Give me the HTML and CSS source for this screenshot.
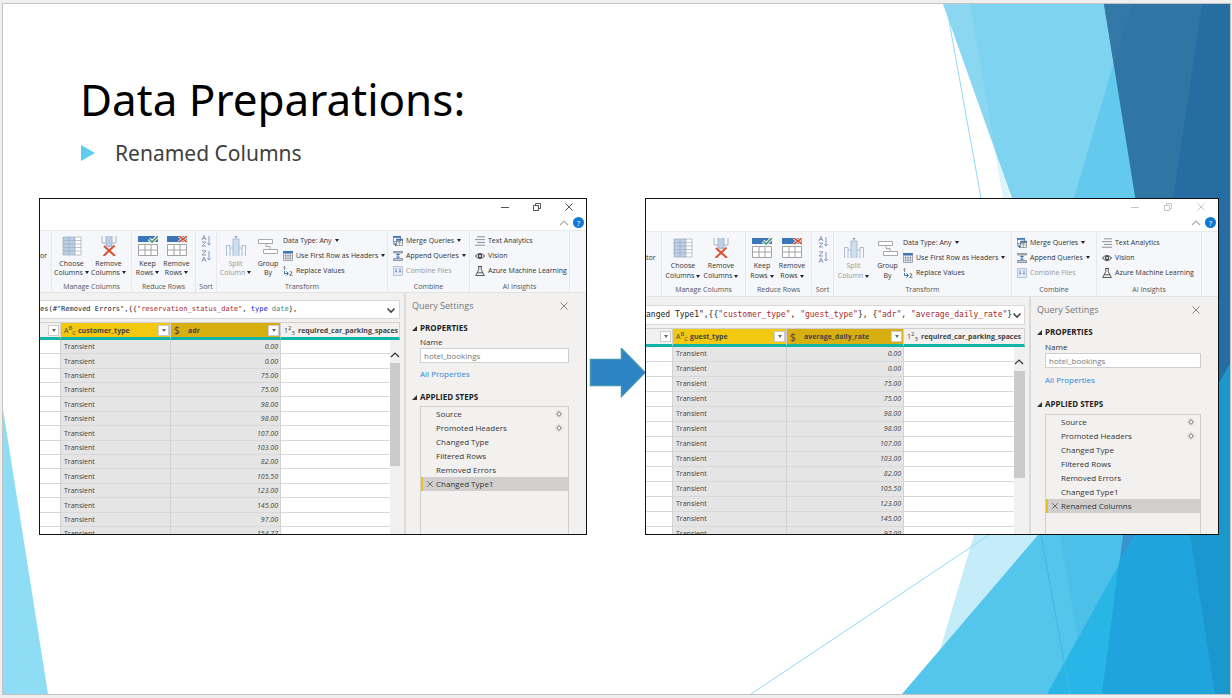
FILE: index.html
```html
<!DOCTYPE html>
<html lang="en">
<head>
<meta charset="utf-8">
<title>Data Preparations</title>
<link rel="stylesheet" href="styles.css">
</head>
<body>
<svg class="sprite" aria-hidden="true">
  <symbol id="choose" viewBox="0 0 20 20"><path fill="#fff" d="M1 1h18v18H1z"/><path fill="#b9cfea" d="M1 1h12v18H1z"/><path d="M1 1h18v18H1zM7 1v18M13 1v18M1 4.500h18M1 8h18M1 11.500h18M1 15h18" fill="none" stroke="#a0aab5" stroke-width=".7"/></symbol>
  <symbol id="removecol" viewBox="0 0 20 20"><path fill="#b9cfea" d="M7 0h6v11H7z"/><path d="M3 0v7h4M7 0v9l3 2 3-2V0M17 0v7h-4" fill="none" stroke="#aab4bf"/><path d="M5 10l11 10M15.500 9.500L4.500 20" stroke="#d9512f" stroke-width="2"/></symbol>
  <symbol id="keep" viewBox="0 0 20 20"><path fill="#fff" d="M.5 8.500h19v11H.5z"/><path fill="#3b76b8" d="M0 0h20v6H0z"/><path d="M.5 8.500h19v11H.5zM.5 14h19M7 8.500v11M13 8.500v11" fill="none" stroke="#a2a2a2"/><path d="M11 3l3 3 6-6" fill="none" stroke="#fff" stroke-width="3.500"/><path d="M11 3l3 3 6-6" fill="none" stroke="#4d9475" stroke-width="1.600"/></symbol>
  <symbol id="removerow" viewBox="0 0 20 20"><path fill="#fff" d="M.5 8.500h19v11H.5z"/><path fill="#3b76b8" d="M0 0h20v6H0z"/><path d="M.5 8.500h19v11H.5zM.5 14h19M7 8.500v11M13 8.500v11" fill="none" stroke="#a2a2a2"/><path d="M12 0l8 6M20 0l-8 6" stroke="#fff" stroke-width="3"/><path d="M12 0l8 6M20 0l-8 6" stroke="#d9512f" stroke-width="1.600"/></symbol>
  <symbol id="sortaz" viewBox="0 0 10 12"><path d="M1 5l2-4.500L5 5M1.500 3.500h3M1 7h4l-4 4h4" fill="none" stroke="#8b9cb3"/><path d="M8 1v9M6.300 8.300L8 10l1.700-1.700" fill="none" stroke="#7f9cc4"/></symbol>
  <symbol id="sortza" viewBox="0 0 10 12"><path d="M1 .8h4L1 5h4M1 11.500L3 7l2 4.500M1.500 10h3" fill="none" stroke="#8b9cb3"/><path d="M8 1v9M6.300 8.300L8 10l1.700-1.700" fill="none" stroke="#7f9cc4"/></symbol>
  <symbol id="split" viewBox="0 0 20 20"><path fill="#cfdff0" d="M7 3h6v17H7z"/><path d="M.5 20V9.500H4V20M7 20V3h6v17M16 20V9.500h3.500V20M4 12h3M13 12h3" fill="none" stroke="#a9bdd4"/><path d="M8.500 0h3L10 2.500z" fill="#7f9cc4"/></symbol>
  <symbol id="group" viewBox="0 0 20 20"><path d="M.5 3.500h14v4H.5zM5.500 13.500h14v4h-14zM8 7.500v3h4v3" fill="#fff" stroke="#a8a8a8"/></symbol>
  <symbol id="table" viewBox="0 0 10 10"><path fill="#fff" d="M.5 1h9v8.500h-9z"/><path fill="#3b76b8" d="M0 0h10v2.500H0z"/><path d="M.5 1v8.500h9V1M2.700 2v7.500M5 2v7.500M7.300 2v7.500M.5 4.800h9M.5 7.200h9" fill="none" stroke="#7c8794" stroke-width=".7"/></symbol>
  <symbol id="replace" viewBox="0 0 10 10"><path d="M.5 1.500L1.700.5V4M6.700 6q1.300-1 2 0t-2 3.300H9.500" fill="none" stroke="#555" stroke-width=".8"/><path d="M1.500 5v2.500h3.500M3.500 5.500l2 2-2 2" fill="none" stroke="#3b76b8"/></symbol>
  <symbol id="merge" viewBox="0 0 10 10"><path d="M.5.500h7v5h-7zM3.500 3h6v6.500h-6z" fill="#fff" stroke="#777" stroke-width=".7"/><path d="M0 0h8v1.700H0zM3.300 3H10v1.700H3.300z" fill="#3b76b8"/><path d="M3.500 7h6M6.500 4.500V10" stroke="#888" stroke-width=".6"/><path d="M1 5.500v3h2M2 7.500l1.500 1L2 10" fill="none" stroke="#3b76b8"/></symbol>
  <symbol id="append" viewBox="0 0 10 10"><path d="M.5.500h9v1.500h-9zM.5 7.500h9v2h-9z" fill="#b9cfea" stroke="#777" stroke-width=".7"/><path d="M5 2.500V7M3.300 3.500h3.400M3.300 5.500L5 7.200l1.700-1.700" fill="none" stroke="#3b76b8"/></symbol>
  <symbol id="combine" viewBox="0 0 10 10"><path d="M.5.500h9v9h-9z" fill="#e4edf7" stroke="#b5c6dc"/><path d="M3 2v4M7 2v4M2 5l1 1.300L4 5M6 5l1 1.300L8 5" fill="none" stroke="#5f87bd" stroke-width=".8"/></symbol>
  <symbol id="lines" viewBox="0 0 10 10"><path d="M2 .8h8M0 3.600h10M2 6.400h8M0 9.200h10" stroke="#777" stroke-width=".8"/></symbol>
  <symbol id="eye" viewBox="0 0 10 10"><path d="M.3 5Q5 0 9.700 5 5 10 .3 5z" fill="none" stroke="#444"/><circle cx="5" cy="5" r="1.600" fill="none" stroke="#444" stroke-width="1.200"/></symbol>
  <symbol id="flask" viewBox="0 0 10 10"><path d="M3 .5h4M3.800.500v3L.7 9.500h8.600L6.200 3.500v-3M2.200 6.800h5.600" fill="none" stroke="#444" stroke-width=".9"/></symbol>
  <symbol id="gear" viewBox="0 0 10 10"><circle cx="5" cy="5" r="2.300" fill="none" stroke="#999" stroke-width="1.200"/><path d="M5 .8v2M5 7.200v2M.8 5h2M7.200 5h2M2 2l1.300 1.300M6.700 6.700L8 8M8 2L6.700 3.300M3.300 6.700L2 8" stroke="#999" stroke-width="1.200"/></symbol>
  <symbol id="x" viewBox="0 0 10 10"><path d="M1.500 1.500l7 7M8.500 1.500l-7 7" stroke="currentColor"/></symbol>
  <symbol id="restore" viewBox="0 0 10 10"><path d="M1.500 3.500h5v5h-5zM3.500 3.500v-2h5v5h-2" fill="none" stroke="currentColor"/></symbol>
  <symbol id="min" viewBox="0 0 10 10"><path d="M1 5.500h8" stroke="currentColor"/></symbol>
  <symbol id="up" viewBox="0 0 10 10"><path d="M1 7l4-4 4 4" fill="none" stroke="currentColor" stroke-width="1.200"/></symbol>
  <symbol id="down" viewBox="0 0 10 10"><path d="M1.500 3.500L5 7l3.500-3.500" fill="none" stroke="currentColor" stroke-width="1.600"/></symbol>
  <symbol id="fold" viewBox="0 0 6 6"><path d="M6 0v6H0z" fill="#333"/></symbol>
</svg>

<main class="slide">
  <svg class="facets" viewBox="3 4 1227 690" preserveAspectRatio="none" aria-hidden="true">
    <path fill="#8fdcf5" d="M3 409L48 694H3z"/>
    <path fill="#dcf4fc" d="M994 146l24 75h-11z"/>
    <path fill="#c5edf9" d="M974 535h166v159H927z"/>
    <path fill="#8bd7f1" d="M943 4h35l40 211z"/>
    <path fill="#7dd3f0" d="M970 4h162l-58 211h-56L995 149z"/>
    <path fill="#63caee" d="M1131 4L1069 215h161V4z"/>
    <path fill="#7dd3f0" d="M1100 4h50l-37 61z"/>
    <path fill="#3076a5" d="M1104 4h126v391H1167z"/>
    <path fill="#3478a8" d="M1104 4h28l-18 61z"/>
    <path fill="#266da1" d="M1202 4h28v391h-86z"/>
    <path fill="#54c5eb" d="M1038 535h192v159H902z"/>
    <path fill="#4dc0e9" d="M1060 535h170v159h-143z"/>
    <path fill="#3a92cc" d="M1123 535h107v40h-112z"/>
    <path fill="#29b5e6" d="M1230 364v330h-183z"/>
    <path fill="#1fa4dd" d="M1119 562L1230 364v330H1102z"/>
    <path fill="#1b97cd" d="M1230 364v330h-15l-25-159v-100z"/>
    <path fill="none" stroke="#8fdaf3" d="M946 4l35 194M989 535L751 694"/>
    <path fill="none" stroke="#3db9e6" d="M1041 535l29 159"/>
  </svg>

  <header class="heading">
    <h1 class="title">Data Preparations:</h1>
    <ul class="bullets"><li>Renamed Columns</li></ul>
  </header>

  <div class="compare">
    <section class="screen before" aria-label="Before renaming">
      <div class="titlebar">
        <div class="winbuttons">
          <button aria-label="Minimize"><svg><use href="#min"/></svg></button>
          <button aria-label="Restore"><svg><use href="#restore"/></svg></button>
          <button aria-label="Close"><svg><use href="#x"/></svg></button>
        </div>
        <div class="helprow">
          <button class="collapse" aria-label="Collapse ribbon"><svg><use href="#up"/></svg></button>
          <button class="help">?</button>
        </div>
      </div>
      <div class="ribbon">
        <div class="group cut"><span>or</span></div>
        <div class="group">
          <div class="tools">
            <button class="big"><svg><use href="#choose"/></svg>Choose<span class="caret">Columns</span></button>
            <button class="big"><svg><use href="#removecol"/></svg>Remove<span class="caret">Columns</span></button>
          </div>
          <div class="label">Manage Columns</div>
        </div>
        <div class="group reduce">
          <div class="tools">
            <button class="big"><svg><use href="#keep"/></svg>Keep<span class="caret">Rows</span></button>
            <button class="big"><svg><use href="#removerow"/></svg>Remove<span class="caret">Rows</span></button>
          </div>
          <div class="label">Reduce Rows</div>
        </div>
        <div class="group">
          <div class="sorts">
            <button aria-label="Sort ascending"><svg><use href="#sortaz"/></svg></button>
            <button aria-label="Sort descending"><svg><use href="#sortza"/></svg></button>
          </div>
          <div class="label">Sort</div>
        </div>
        <div class="group transform">
          <div class="tools">
            <button class="big muted"><svg><use href="#split"/></svg>Split<span class="caret">Column</span></button>
            <button class="big"><svg><use href="#group"/></svg>Group<span>By</span></button>
            <div class="list">
              <button class="small caret">Data Type: Any</button>
              <button class="small caret"><svg><use href="#table"/></svg>Use First Row as Headers</button>
              <button class="small"><svg><use href="#replace"/></svg>Replace Values</button>
            </div>
          </div>
          <div class="label">Transform</div>
        </div>
        <div class="group">
          <div class="list">
            <button class="small caret"><svg><use href="#merge"/></svg>Merge Queries</button>
            <button class="small caret"><svg><use href="#append"/></svg>Append Queries</button>
            <button class="small muted"><svg><use href="#combine"/></svg>Combine Files</button>
          </div>
          <div class="label">Combine</div>
        </div>
        <div class="group">
          <div class="list">
            <button class="small"><svg><use href="#lines"/></svg>Text Analytics</button>
            <button class="small"><svg><use href="#eye"/></svg>Vision</button>
            <button class="small"><svg><use href="#flask"/></svg>Azure Machine Learning</button>
          </div>
          <div class="label">AI Insights</div>
        </div>
        <div class="group"></div>
      </div>
      <div class="work">
        <div class="data">
          <div class="formula"><code>es(#"Removed Errors",{{<b>"reservation_status_date"</b>, <i>type</i> <em>date</em>},</code><button aria-label="Expand formula"><svg><use href="#down"/></svg></button></div>
          <table class="grid">
            <colgroup><col class="c0"><col class="c1"><col class="c2"><col><col class="c4"></colgroup>
            <thead><tr>
              <th><div class="head"><button class="filter" aria-label="Filter"></button></div></th>
              <th class="gold"><div class="head"><span class="kind">A<sup>B</sup><sub>C</sub></span><span class="name">customer_type</span><button class="filter" aria-label="Filter customer_type"></button></div></th>
              <th class="gold deep"><div class="head"><span class="kind money">$</span><span class="name">adr</span><button class="filter" aria-label="Filter adr"></button></div></th>
              <th colspan="2"><div class="head"><span class="kind">1<sup>2</sup><sub>3</sub></span><span class="name">required_car_parking_spaces</span></div></th>
            </tr></thead>
            <tbody>
              <tr><td></td><td>Transient</td><td>0.00</td><td></td><td class="scroll" rowspan="14"><div class="track"><svg><use href="#up"/></svg><div class="thumb"></div></div></td></tr>
              <tr><td></td><td>Transient</td><td>0.00</td><td></td></tr>
              <tr><td></td><td>Transient</td><td>75.00</td><td></td></tr>
              <tr><td></td><td>Transient</td><td>75.00</td><td></td></tr>
              <tr><td></td><td>Transient</td><td>98.00</td><td></td></tr>
              <tr><td></td><td>Transient</td><td>98.00</td><td></td></tr>
              <tr><td></td><td>Transient</td><td>107.00</td><td></td></tr>
              <tr><td></td><td>Transient</td><td>103.00</td><td></td></tr>
              <tr><td></td><td>Transient</td><td>82.00</td><td></td></tr>
              <tr><td></td><td>Transient</td><td>105.50</td><td></td></tr>
              <tr><td></td><td>Transient</td><td>123.00</td><td></td></tr>
              <tr><td></td><td>Transient</td><td>145.00</td><td></td></tr>
              <tr><td></td><td>Transient</td><td>97.00</td><td></td></tr>
              <tr><td></td><td>Transient</td><td>154.77</td><td></td></tr>
            </tbody>
          </table>
        </div>
        <aside class="settings">
          <div class="panelhead"><h2>Query Settings</h2><button aria-label="Close panel"><svg><use href="#x"/></svg></button></div>
          <h3><svg><use href="#fold"/></svg>PROPERTIES</h3>
          <div class="props">
            <label for="name-before">Name</label>
            <input id="name-before" type="text" value="hotel_bookings">
            <a href="#all">All Properties</a>
          </div>
          <h3><svg><use href="#fold"/></svg>APPLIED STEPS</h3>
          <ol class="steps">
            <li>Source<svg class="gear"><use href="#gear"/></svg></li>
            <li>Promoted Headers<svg class="gear"><use href="#gear"/></svg></li>
            <li>Changed Type</li>
            <li>Filtered Rows</li>
            <li>Removed Errors</li>
            <li class="current"><button aria-label="Delete step"><svg><use href="#x"/></svg></button>Changed Type1</li>
          </ol>
        </aside>
      </div>
    </section>

    <svg class="arrow" viewBox="0 0 58 52" aria-hidden="true"><path d="M3.500 11.500h31v-11L58 24.500l-23.500 24v-11h-31z" fill="#2e83c4" stroke="#3f96b5" stroke-width="1.500"/></svg>

    <section class="screen after" aria-label="After renaming">
      <div class="titlebar">
        <div class="winbuttons">
          <button aria-label="Minimize"><svg><use href="#min"/></svg></button>
          <button aria-label="Restore"><svg><use href="#restore"/></svg></button>
          <button aria-label="Close"><svg><use href="#x"/></svg></button>
        </div>
        <div class="helprow">
          <button class="collapse" aria-label="Collapse ribbon"><svg><use href="#up"/></svg></button>
          <button class="help">?</button>
        </div>
      </div>
      <div class="ribbon">
        <div class="group cut"><span>tor</span></div>
        <div class="group">
          <div class="tools">
            <button class="big"><svg><use href="#choose"/></svg>Choose<span class="caret">Columns</span></button>
            <button class="big"><svg><use href="#removecol"/></svg>Remove<span class="caret">Columns</span></button>
          </div>
          <div class="label">Manage Columns</div>
        </div>
        <div class="group reduce">
          <div class="tools">
            <button class="big"><svg><use href="#keep"/></svg>Keep<span class="caret">Rows</span></button>
            <button class="big"><svg><use href="#removerow"/></svg>Remove<span class="caret">Rows</span></button>
          </div>
          <div class="label">Reduce Rows</div>
        </div>
        <div class="group">
          <div class="sorts">
            <button aria-label="Sort ascending"><svg><use href="#sortaz"/></svg></button>
            <button aria-label="Sort descending"><svg><use href="#sortza"/></svg></button>
          </div>
          <div class="label">Sort</div>
        </div>
        <div class="group transform">
          <div class="tools">
            <button class="big muted"><svg><use href="#split"/></svg>Split<span class="caret">Column</span></button>
            <button class="big"><svg><use href="#group"/></svg>Group<span>By</span></button>
            <div class="list">
              <button class="small caret">Data Type: Any</button>
              <button class="small caret"><svg><use href="#table"/></svg>Use First Row as Headers</button>
              <button class="small"><svg><use href="#replace"/></svg>Replace Values</button>
            </div>
          </div>
          <div class="label">Transform</div>
        </div>
        <div class="group">
          <div class="list">
            <button class="small caret"><svg><use href="#merge"/></svg>Merge Queries</button>
            <button class="small caret"><svg><use href="#append"/></svg>Append Queries</button>
            <button class="small muted"><svg><use href="#combine"/></svg>Combine Files</button>
          </div>
          <div class="label">Combine</div>
        </div>
        <div class="group">
          <div class="list">
            <button class="small"><svg><use href="#lines"/></svg>Text Analytics</button>
            <button class="small"><svg><use href="#eye"/></svg>Vision</button>
            <button class="small"><svg><use href="#flask"/></svg>Azure Machine Learning</button>
          </div>
          <div class="label">AI Insights</div>
        </div>
        <div class="group"></div>
      </div>
      <div class="work">
        <div class="data">
          <div class="formula"><code>anged Type1",{{<b>"customer_type"</b>, <b>"guest_type"</b>}, {<b>"adr"</b>, <b>"average_daily_rate"</b>}</code><button aria-label="Expand formula"><svg><use href="#down"/></svg></button></div>
          <table class="grid">
            <colgroup><col class="c0"><col class="c1"><col class="c2"><col><col class="c4"></colgroup>
            <thead><tr>
              <th><div class="head"><button class="filter" aria-label="Filter"></button></div></th>
              <th class="gold"><div class="head"><span class="kind">A<sup>B</sup><sub>C</sub></span><span class="name">guest_type</span><button class="filter" aria-label="Filter guest_type"></button></div></th>
              <th class="gold deep"><div class="head"><span class="kind money">$</span><span class="name">average_daily_rate</span><button class="filter" aria-label="Filter average_daily_rate"></button></div></th>
              <th colspan="2"><div class="head"><span class="kind">1<sup>2</sup><sub>3</sub></span><span class="name">required_car_parking_spaces</span></div></th>
            </tr></thead>
            <tbody>
              <tr><td></td><td>Transient</td><td>0.00</td><td></td><td class="scroll" rowspan="13"><div class="track"><svg><use href="#up"/></svg><div class="thumb"></div></div></td></tr>
              <tr><td></td><td>Transient</td><td>0.00</td><td></td></tr>
              <tr><td></td><td>Transient</td><td>75.00</td><td></td></tr>
              <tr><td></td><td>Transient</td><td>75.00</td><td></td></tr>
              <tr><td></td><td>Transient</td><td>98.00</td><td></td></tr>
              <tr><td></td><td>Transient</td><td>98.00</td><td></td></tr>
              <tr><td></td><td>Transient</td><td>107.00</td><td></td></tr>
              <tr><td></td><td>Transient</td><td>103.00</td><td></td></tr>
              <tr><td></td><td>Transient</td><td>82.00</td><td></td></tr>
              <tr><td></td><td>Transient</td><td>105.50</td><td></td></tr>
              <tr><td></td><td>Transient</td><td>123.00</td><td></td></tr>
              <tr><td></td><td>Transient</td><td>145.00</td><td></td></tr>
              <tr><td></td><td>Transient</td><td>97.00</td><td></td></tr>
            </tbody>
          </table>
        </div>
        <aside class="settings">
          <div class="panelhead"><h2>Query Settings</h2><button aria-label="Close panel"><svg><use href="#x"/></svg></button></div>
          <h3><svg><use href="#fold"/></svg>PROPERTIES</h3>
          <div class="props">
            <label for="name-after">Name</label>
            <input id="name-after" type="text" value="hotel_bookings">
            <a href="#all">All Properties</a>
          </div>
          <h3><svg><use href="#fold"/></svg>APPLIED STEPS</h3>
          <ol class="steps">
            <li>Source<svg class="gear"><use href="#gear"/></svg></li>
            <li>Promoted Headers<svg class="gear"><use href="#gear"/></svg></li>
            <li>Changed Type</li>
            <li>Filtered Rows</li>
            <li>Removed Errors</li>
            <li>Changed Type1</li>
            <li class="current"><button aria-label="Delete step"><svg><use href="#x"/></svg></button>Renamed Columns</li>
          </ol>
        </aside>
      </div>
    </section>
  </div>
</main>
</body>
</html>
```

FILE: styles.css
```css
* { box-sizing: border-box; }
body {
  margin: 0;
  padding: 3px 1px 3px 2px;
  min-height: 100vh;
  display: flex;
  background: #efefef;
  font-family: "Open Sans", "Noto Sans", sans-serif;
}
button { padding: 0; border: 0; background: none; font: inherit; color: inherit; }
svg { display: block; flex: none; }
.sprite { position: absolute; width: 0; height: 0; }

.slide {
  position: relative;
  flex: 1;
  min-width: 0;
  border: 1px solid #c3c3c3;
  background: #fff;
}
.facets { position: absolute; inset: 0; width: 100%; height: 100%; }

.heading { position: relative; padding: 65px 78px 0 77px; height: 194px; font-family: "Noto Sans", sans-serif; }
.title { margin: 0; font-size: 44px; line-height: 60px; font-weight: 400; color: #000; }
.bullets { margin: 8px 0 0; padding: 0 0 0 1px; list-style: none; font-size: 21px; line-height: 32px; color: #404040; }
.bullets li { display: flex; align-items: center; gap: 20px; }
.bullets li::before {
  content: "";
  border-left: 14px solid #5fcbef;
  border-top: 8px solid transparent;
  border-bottom: 8px solid transparent;
}

.compare {
  position: relative;
  display: grid;
  grid-template-columns: 548fr 58fr 574fr;
  padding: 0 11px 0 36px;
}
.arrow { width: 100%; height: 52px; margin-top: 150px; }

/* Query editor window */
.screen {
  --line: 9px;
  --big-top: 5px;
  --list-top: 2px;
  display: flex;
  flex-direction: column;
  height: 337px;
  min-width: 0;
  overflow: hidden;
  border: 1px solid #111;
  background: #f2f1f0;
  font-size: 7px;
  line-height: var(--line);
  color: #333;
}
.after { --line: 10px; --big-top: 6px; --list-top: 3px; }

.titlebar { height: 31px; flex: none; background: #fff; }
.after .titlebar { height: 32px; }
.winbuttons { display: flex; justify-content: flex-end; height: 16px; padding-right: 1px; color: #555; }
.winbuttons button { width: 32px; display: grid; place-items: center; }
.winbuttons svg { width: 10px; height: 10px; }
.after .winbuttons { color: #c5c5c5; }
.after .winbuttons button { width: 33px; }
.helprow { display: flex; justify-content: flex-end; align-items: center; gap: 4px; height: 15px; padding-right: 2px; }
.helprow svg { width: 10px; height: 10px; color: #aaa; }
.help { width: 11px; height: 11px; border-radius: 50%; background: #0f78d0; color: #fff; text-align: center; line-height: 10px; font-size: 8px; }

.ribbon {
  flex: none;
  display: grid;
  grid-template-columns: 12fr 80fr 64fr 21fr 171fr 82fr 100fr 16fr;
  height: 63px;
  border-top: 1px solid #e8e9ea;
  border-bottom: 1px solid #e3e4e5;
  background: #f5f7fa;
}
.after .ribbon { height: 66px; grid-template-columns: 16fr 84fr 66fr 22fr 178fr 85fr 105fr 16fr; }
.group { min-width: 0; display: flex; flex-direction: column; border-right: 1px solid #e6e8eb; white-space: nowrap; }
.group:last-child { border-right: 0; }
.cut { justify-content: center; padding-bottom: 12px; }
.label { margin-top: auto; padding-bottom: 1px; text-align: center; color: #555; }
.tools { display: flex; padding-left: 1px; }
.after .group:nth-child(2) .tools { padding-left: 2px; }
.big { width: 37px; flex: none; padding-top: var(--big-top); display: flex; flex-direction: column; align-items: center; }
.big svg { width: 20px; height: 20px; margin-bottom: 3px; }
.after .big { width: 38px; }
.reduce .big { width: 29px; }
.transform .big { width: 35px; }
.transform .big + .big { width: 30px; }
.after .reduce .big { width: 30px; }
.after .transform .big { width: 37px; }
.after .transform .big + .big { width: 31px; }
.muted { color: #999; }
.caret { display: flex; align-items: center; }
.caret::after {
  content: "";
  margin-left: 2px;
  border-top: 3px solid #222;
  border-left: 2px solid transparent;
  border-right: 2px solid transparent;
}
.list { padding-top: var(--list-top); padding-left: 5px; display: flex; flex-direction: column; align-items: flex-start; }
.transform .list { padding-left: 0; }
.small { display: flex; align-items: center; gap: 3px; height: 15px; }
.small svg { width: 10px; height: 10px; }
.small.caret::after { margin-left: 0; }
.sorts { display: flex; flex-direction: column; align-items: center; gap: 3px; padding-top: 4px; }
.sorts svg { width: 10px; height: 12px; }

.work { flex: 1; min-height: 0; display: grid; grid-template-columns: 364fr 182fr; }
.after .work { grid-template-columns: 383fr 189fr; }
.data { min-width: 0; min-height: 0; overflow: hidden; padding: 7px 4px 0 0; }
.after .data { padding-top: 8px; }
.formula {
  display: flex;
  align-items: center;
  justify-content: space-between;
  height: 19px;
  padding-right: 3px;
  border: 1px solid #d8d8d8;
  border-left: 0;
  background: #fff;
  color: #222;
  font-family: "DejaVu Sans Mono", monospace;
}
.formula code { font: inherit; white-space: pre; }
.formula b { font-weight: 400; color: #a82a2a; }
.formula i { font-style: normal; color: #1414e0; }
.formula em { font-style: normal; color: #2d8a8a; }
.formula svg { width: 10px; height: 10px; color: #444; }
.after .formula { height: 20px; font-size: 8px; }

.grid { width: 100%; margin-top: 3px; table-layout: fixed; border-collapse: separate; border-spacing: 0; }
.c0 { width: 21px; }
.c1, .c2 { width: 110px; }
.c4 { width: 10px; }
.after .c0 { width: 27px; }
.after .c1 { width: 114px; }
.after .c2 { width: 117px; }
.after .c4 { width: 11px; }
.grid th {
  padding: 0;
  height: 18px;
  border-top: 1px solid #cfcfcf;
  border-right: 1px solid #d0d0d0;
  border-bottom: 3px solid #10b5a5;
  background: #f2f1f0;
  text-align: left;
}
.after .grid th { height: 19px; }
.grid th.gold { background: #f2c811; }
.grid th.deep { background: #d8af10; }
.head { display: flex; align-items: center; padding: 0 1px 0 3px; white-space: nowrap; }
.kind { width: 14px; flex: none; font-weight: 400; color: #444; }
.kind sup, .kind sub { font-size: 6px; line-height: 0; }
.money { font-size: 10px; }
.name { color: #444; }
.filter { width: 11px; height: 11px; margin-left: auto; border: 1px solid #ccc; background: #fff; display: grid; place-items: center; }
.filter::after { content: ""; border-top: 3px solid #666; border-left: 2px solid transparent; border-right: 2px solid transparent; }
.grid tbody tr { height: 14px; }
.before .grid tbody tr:nth-child(5n+2), .before .grid tbody tr:nth-child(5n) { height: 15px; }
.after .grid tbody tr { height: 15px; }
.grid td { padding: 0 2px 0 3px; border-bottom: 1px solid #d9d9d9; border-right: 1px solid #d2d2d2; background: #fff; color: #444; }
.grid td:nth-child(2), .grid td:nth-child(3) { background: #e5e5e5; }
.grid td:nth-child(3) { text-align: right; font-style: italic; }
.grid td:nth-child(4) { border-right: 0; }
.grid td.scroll { padding: 0; border: 0; background: #f0f0f0; vertical-align: top; }
.track { padding-top: 10px; }
.track svg { width: 10px; height: 10px; color: #333; }
.thumb { height: 103px; margin-top: 3px; background: #cbcbcb; }
.after .thumb { height: 107px; margin-top: 4px; }

.settings { min-width: 0; padding: 7px 17px 0 6px; border-left: 2px solid #dbdbdb; display: flex; flex-direction: column; }
.panelhead { display: flex; justify-content: space-between; align-items: center; height: 12px; }
.panelhead h2 { margin: 0; font-size: 9px; line-height: 12px; font-weight: 400; color: #777; }
.panelhead button { color: #888; }
.panelhead svg { width: 10px; height: 10px; }
.settings h3 { display: flex; align-items: center; gap: 3px; height: 12px; margin: 10px 0 0; font-size: 8px; line-height: 12px; font-weight: 700; color: #222; }
.settings h3 svg { width: 5px; height: 5px; }
.props { display: flex; flex-direction: column; align-items: flex-start; padding-left: 8px; font-size: 8px; line-height: 12px; }
.props label { margin-top: 2px; }
.props input { width: 100%; height: 15px; padding: 0 3px; border: 1px solid #cfcfcf; background: #fff; font: inherit; font-size: 8px; color: #777; }
.props a { margin-top: 5px; color: #2b88d8; text-decoration: none; }
.settings .props + h3 { margin-top: 11px; }
.steps { flex: 1; margin: 3px 0 0 8px; padding: 0; list-style: none; border: 1px solid #cfcfcf; border-width: 1px 1px 0; font-size: 8px; line-height: 14px; }
.steps li { position: relative; display: flex; align-items: center; height: 14px; padding-left: 15px; padding-right: 5px; }
.steps .gear { width: 8px; height: 8px; margin-left: auto; }
.steps .current { padding-left: 0; border-left: 2px solid #e8c02a; background: #d0cfce; }
.steps button { width: 13px; display: grid; place-items: center; color: #555; }
.steps button svg { width: 8px; height: 8px; }
.after .props label { margin-top: 3px; }
.after .props a { margin-top: 6px; }
.after .settings .props + h3 { margin-top: 12px; }
.after .steps { margin-top: 4px; }
```
